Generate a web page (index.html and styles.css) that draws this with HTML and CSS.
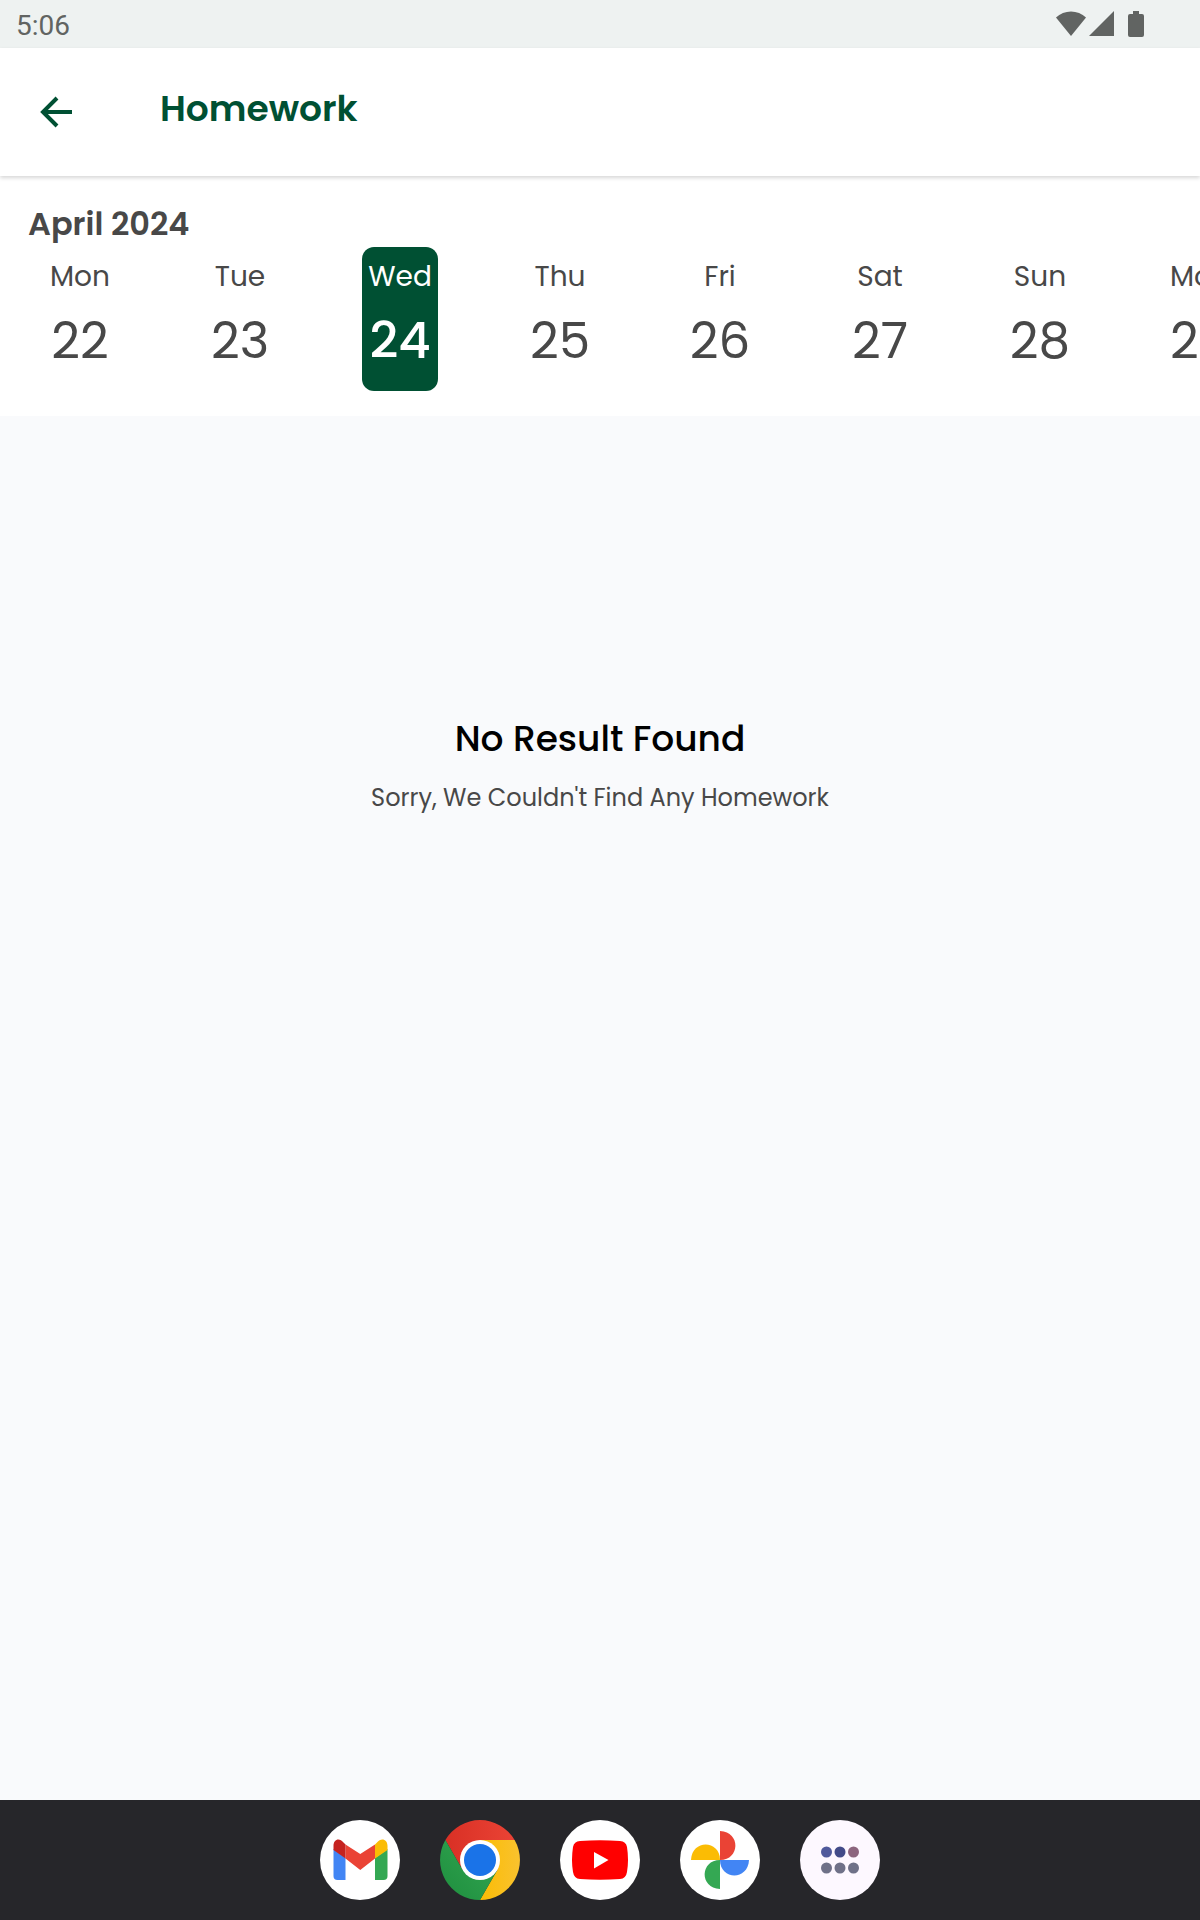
FILE: index.html
```html
<!DOCTYPE html>
<html lang="en">
<head>
<meta charset="utf-8">
<meta name="viewport" content="width=device-width, initial-scale=1">
<title>Homework</title>
<link rel="stylesheet" href="styles.css">
</head>
<body>
<div class="screen">
  <div class="status-bar">
    <time class="clock">5:06</time>
    <div class="status-icons">
      <svg class="wifi" width="30" height="26" viewBox="0 0 30 26" aria-hidden="true"><path d="M0 6.500C8-1.500 22-1.500 30 6.500L15 25Z"/></svg>
      <svg class="signal" width="25" height="26" viewBox="0 0 25 26" aria-hidden="true"><path d="M25 0V25H0Z"/></svg>
      <svg class="battery" width="16" height="26" viewBox="0 0 16 26" aria-hidden="true"><path d="M5 0H11V3H14Q16 3 16 5V24Q16 26 14 26H2Q0 26 0 24V5Q0 3 2 3H5Z"/></svg>
    </div>
  </div>

  <header class="app-bar">
    <button class="back" type="button" aria-label="Back">
      <svg width="32" height="32" viewBox="0 0 32 32" aria-hidden="true"><path d="M32 16H3M17 2L3 16L17 30" fill="none" stroke="currentColor" stroke-width="4"/></svg>
    </button>
    <h1 class="title">Homework</h1>
  </header>

  <section class="calendar">
    <h2 class="month">April 2024</h2>
    <div class="days">
      <button class="day" type="button"><span class="name">Mon</span><span class="number">22</span></button>
      <button class="day" type="button"><span class="name">Tue</span><span class="number">23</span></button>
      <button class="day selected" type="button" aria-pressed="true"><span class="name">Wed</span><span class="number">24</span></button>
      <button class="day" type="button"><span class="name">Thu</span><span class="number">25</span></button>
      <button class="day" type="button"><span class="name">Fri</span><span class="number">26</span></button>
      <button class="day" type="button"><span class="name">Sat</span><span class="number">27</span></button>
      <button class="day" type="button"><span class="name">Sun</span><span class="number">28</span></button>
      <button class="day" type="button"><span class="name">Mon</span><span class="number">29</span></button>
    </div>
  </section>

  <main class="content">
    <h2 class="empty-title">No Result Found</h2>
    <p class="empty-text">Sorry, We Couldn't Find Any Homework</p>
  </main>

  <nav class="dock" aria-label="Apps">
    <button class="app" type="button" aria-label="Gmail">
      <svg viewBox="0 0 80 80" aria-hidden="true">
        <circle cx="40" cy="40" r="40" fill="#fff"/>
        <path d="M13.500 29L25.500 38V60H17.500Q13.500 60 13.500 56Z" fill="#4285f4"/>
        <path d="M55 38L67.500 29V56Q67.500 60 63.500 60H55Z" fill="#34a853"/>
        <path d="M25.500 24.500L40.250 34L55 24.500V38.500L40.250 50L25.500 38.500Z" fill="#ea4335"/>
        <path d="M13.500 26C13.500 19 19.500 17.500 23.500 22.500L25.500 24.500V38.500L13.500 30Z" fill="#c5221f"/>
        <path d="M67.500 26C67.500 19 61 17.500 57 22.500L55 24.500V38.500L67.500 30Z" fill="#fbbc04"/>
      </svg>
    </button>
    <button class="app" type="button" aria-label="Chrome">
      <svg viewBox="0 0 80 80" aria-hidden="true">
        <defs>
          <linearGradient id="red" x1="0" x2="1"><stop offset="0" stop-color="#d93025"/><stop offset="1" stop-color="#ea4335"/></linearGradient>
          <linearGradient id="green" x1="0" y1="1" x2="1" y2="0"><stop offset="0" stop-color="#1e8e3e"/><stop offset="1" stop-color="#34a853"/></linearGradient>
          <linearGradient id="yellow" x1="1" x2="0"><stop offset="0" stop-color="#f9c22f"/><stop offset="1" stop-color="#fbbc04"/></linearGradient>
        </defs>
        <path d="M40 20H74.600A40 40 0 0 1 40 80L57.300 50Z" fill="url(#yellow)"/>
        <path d="M22.700 50L5.400 20A40 40 0 0 1 74.600 20H40Z" fill="url(#red)"/>
        <path d="M57.300 50L40 80A40 40 0 0 1 5.400 20L22.700 50L40 60Z" fill="url(#green)"/>
        <circle cx="40" cy="40" r="20" fill="#fff"/>
        <circle cx="40" cy="40" r="16" fill="#1a73e8"/>
      </svg>
    </button>
    <button class="app" type="button" aria-label="YouTube">
      <svg viewBox="0 0 80 80" aria-hidden="true">
        <circle cx="40" cy="40" r="40" fill="#fff"/>
        <path d="M20 21Q40 19.500 60 21Q66 21.300 67 27Q69 40 67 52Q66 58.500 60 59Q40 60.500 20 59Q14 58.500 13 52Q11 40 13 27Q14 21.500 20 21Z" fill="#f00"/>
        <path d="M34 32L48.500 40L34 48.500Z" fill="#fff"/>
      </svg>
    </button>
    <button class="app" type="button" aria-label="Photos">
      <svg viewBox="0 0 80 80" aria-hidden="true">
        <circle cx="40" cy="40" r="40" fill="#fff"/>
        <path d="M40 11C61 12 60 40 40 40Z" fill="#ea4335"/>
        <path d="M69 40C68 61 40 60 40 40Z" fill="#4285f4"/>
        <path d="M40 69C19 68 20 40 40 40Z" fill="#34a853"/>
        <path d="M11 40C12 19 40 20 40 40Z" fill="#fbbc04"/>
      </svg>
    </button>
    <button class="app" type="button" aria-label="All apps">
      <svg viewBox="0 0 80 80" aria-hidden="true">
        <circle cx="40" cy="40" r="40" fill="#fdf8ff"/>
        <circle cx="26.500" cy="32" r="5.500" fill="#505a9c"/><circle cx="40" cy="32" r="5.500" fill="#424b89"/><circle cx="53.500" cy="32" r="5.500" fill="#8c657e"/>
        <circle cx="26.500" cy="48" r="5.500" fill="#6f7188"/><circle cx="40" cy="48" r="5.500" fill="#6f7188"/><circle cx="53.500" cy="48" r="5.500" fill="#6f7188"/>
      </svg>
    </button>
  </nav>
</div>
</body>
</html>
```
FILE: styles.css
```css
* {
  box-sizing: border-box;
}

body,
h1,
h2,
p {
  margin: 0;
}

body {
  font-family: Poppins, "Open Sans", sans-serif;
  color: #484848;
  background: #f9fafc;
}

button {
  padding: 0;
  border: 0;
  background: none;
  color: inherit;
  font: inherit;
}

svg {
  display: block;
}

.screen {
  display: flex;
  flex-direction: column;
  min-height: 100vh;
}

.status-bar {
  display: flex;
  align-items: center;
  justify-content: space-between;
  height: 48px;
  padding: 0 56px 0 16px;
  background: #eef2f1;
  color: #616462;
}

.clock {
  font-family: Roboto, sans-serif;
  font-size: 28px;
  line-height: 32px;
  padding-top: 4px;
}

.status-icons {
  display: flex;
  fill: currentColor;
}

.signal {
  margin: 0 14px 0 3px;
}

.app-bar {
  display: flex;
  align-items: center;
  gap: 88px;
  height: 128px;
  padding: 0 40px;
  background: #fff;
  color: #005033;
  box-shadow: 0 2px 4px rgba(0, 0, 0, 0.16);
  z-index: 1;
}

.title {
  font-size: 36px;
  font-weight: 600;
  line-height: 48px;
  padding-bottom: 6px;
}

.calendar {
  padding: 24px 0 25px;
  background: #fff;
  overflow: hidden;
}

.month {
  padding: 0 28px;
  font-size: 32px;
  font-weight: 600;
  line-height: 47px;
}

.days {
  display: flex;
  gap: 84px;
  padding: 0 42px;
}

.day {
  display: flex;
  flex: none;
  flex-direction: column;
  align-items: center;
  width: 76px;
  height: 144px;
  padding-top: 10px;
  border-radius: 12px;
}

.name {
  font-size: 28px;
  line-height: 40px;
}

.number {
  padding-top: 12px;
  font-size: 50px;
  line-height: 64px;
}

.selected {
  background: #005033;
  color: #fff;
}

.selected .number {
  font-weight: 500;
}

.content {
  flex: 1;
  padding: 295px 24px 24px;
  text-align: center;
}

.empty-title {
  color: #000;
  font-size: 36px;
  font-weight: 500;
  line-height: 56px;
}

.empty-text {
  padding-top: 11px;
  font-size: 24px;
  line-height: 40px;
}

.dock {
  display: flex;
  align-items: center;
  justify-content: center;
  gap: 40px;
  height: 120px;
  background: #26262a;
}

.app {
  width: 80px;
  height: 80px;
}
```
